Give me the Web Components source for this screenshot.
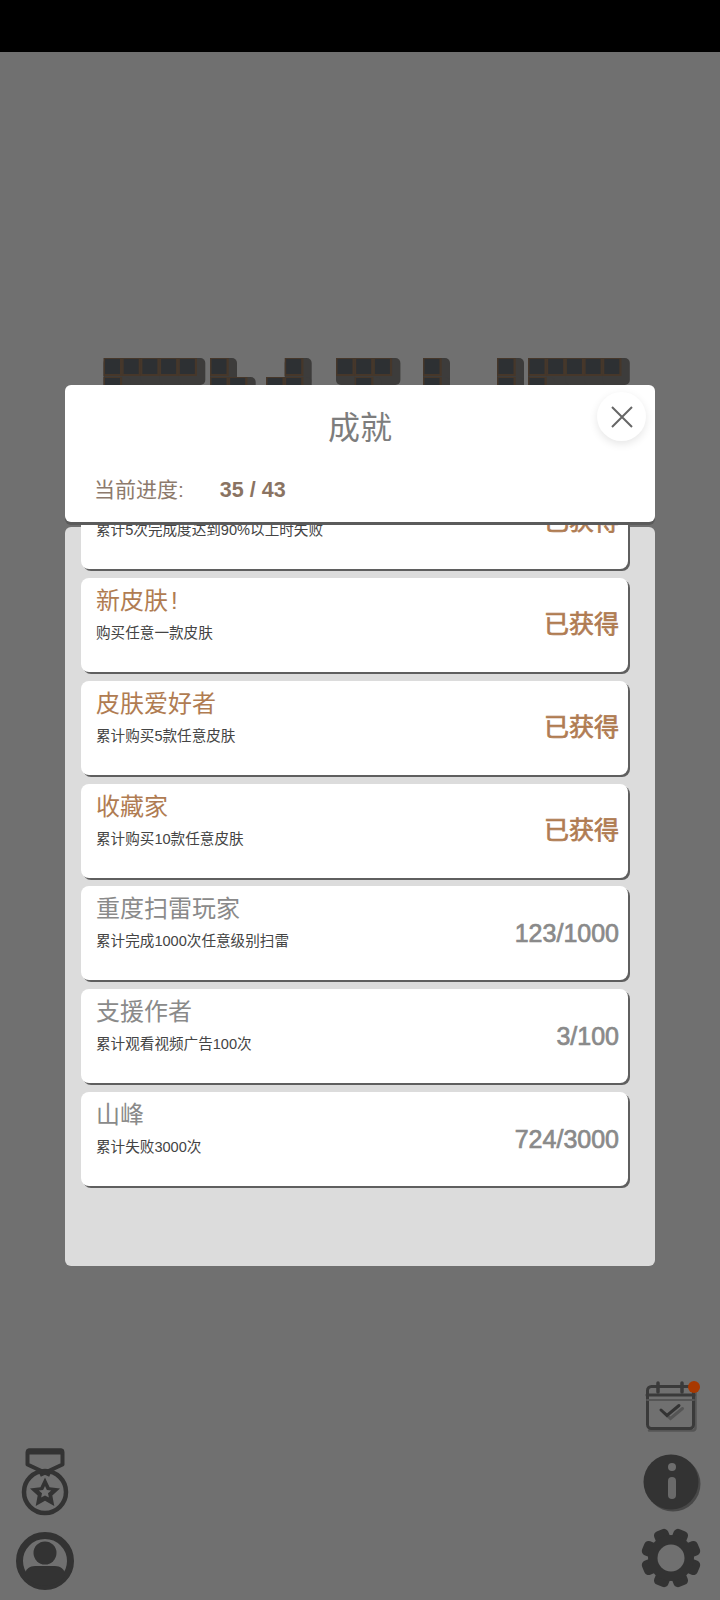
<!DOCTYPE html>
<html lang="zh"><head><meta charset="utf-8">
<style>
html,body{margin:0;padding:0;background:#707070}
body{font-family:"Liberation Sans","Noto Sans CJK SC",sans-serif}
</style></head><body>
<game-screen>
  <achievement-modal slot="modal" progress="35 / 43">
    <achievement-card state="done" name="" desc="累计5次完成度达到90%以上时失败" status="已获得"></achievement-card>
    <achievement-card state="done" name="新皮肤&lt;span style='margin-left:3px'&gt;!&lt;/span&gt;" desc="购买任意一款皮肤" status="已获得"></achievement-card>
    <achievement-card state="done" name="皮肤爱好者" desc="累计购买5款任意皮肤" status="已获得"></achievement-card>
    <achievement-card state="done" name="收藏家" desc="累计购买10款任意皮肤" status="已获得"></achievement-card>
    <achievement-card name="重度扫雷玩家" desc="累计完成1000次任意级别扫雷" status="123/1000"></achievement-card>
    <achievement-card name="支援作者" desc="累计观看视频广告100次" status="3/100"></achievement-card>
    <achievement-card name="山峰" desc="累计失败3000次" status="724/3000"></achievement-card>
  </achievement-modal>
</game-screen>
<script>
class GameScreen extends HTMLElement{
  constructor(){super();
    const groups=[
      {x:103.500,cells:[[0,0],[1,0],[2,0],[3,0],[4,0],[0,1]]},
      {x:210,cells:[[0,0],[0,1],[1,1]]},
      {x:266,cells:[[1,0],[0,1],[1,1]]},
      {x:336,cells:[[0,0],[1,0],[2,0],[1,1]]},
      {x:423,cells:[[0,0],[0,1]]},
      {x:497,cells:[[0,0],[0,1]]},
      {x:528,cells:[[0,0],[1,0],[2,0],[3,0],[4,0],[0,1]]}
    ];
    let cells='';
    for(const g of groups){for(const [c,r] of g.cells){
      const x=g.x+c*18.7,y=358+r*19;
      cells+=`<rect x="${x}" y="${y}" width="27" height="27" rx="5" fill="#3d3c3b"/>`;
    }}
    for(const g of groups){for(const [c,r] of g.cells){
      const x=g.x+c*18.7,y=358+r*19;
      cells+=`<rect x="${x}" y="${y}" width="18.700" height="18" fill="#46372a"/><rect x="${x+1.500}" y="${y+1}" width="15" height="15" fill="#2d3033"/>`;
    }}
    let teeth='';
    for(let k=0;k<8;k++){teeth+=`<rect x="-7.500" y="-30" width="15" height="18" rx="4.500" fill="#333" transform="rotate(${22.5+45*k})"/>`;}
    this.attachShadow({mode:'open'}).innerHTML=`<style>
      :host{display:block;position:relative;width:720px;height:1600px;overflow:hidden;background:#707070}
      .bar{height:52px;background:#000}
      .title{position:absolute;left:0;top:0;width:720px;height:420px;filter:blur(.6px)}
      .tools{position:absolute;left:0;right:0;bottom:0;padding:0 15px 0 16px;display:flex;justify-content:space-between;align-items:flex-end}
      .col{display:flex;flex-direction:column;align-items:center}
      svg{display:block}
    </style>
    <div class="bar"></div>
    <svg class="title" viewBox="0 0 720 420">${cells}</svg>
    <slot name="modal"></slot>
    <div class="tools">
      <div class="col" style="width:58px;gap:13px;padding-bottom:10px">
        <svg width="50" height="72" viewBox="0 0 50 72">
          <path d="M9.500 3.500h31a2 2 0 0 1 2 2v12L20 28M7.500 5.500v12L30 28M9.500 3.500a2 2 0 0 0-2 2" fill="none" stroke="#333" stroke-width="4" stroke-linejoin="round"/>
          <path d="M9 1.500h32a3 3 0 0 1 3 3v3H6v-3a3 3 0 0 1 3-3Z" fill="#333"/>
          <circle cx="25" cy="45" r="21" fill="none" stroke="#333" stroke-width="4.500"/>
          <path d="m25 30.500 4.600 9.700 10.400 1.200-7.700 7.200 2 10.400-9.300-5.200-9.300 5.200 2-10.400-7.700-7.200 10.400-1.200Z" fill="#333"/>
          <path d="m25 39 1.900 3.900 4.300.5-3.200 2.900.9 4.200L25 48.400l-3.900 2.100.9-4.200-3.200-2.900 4.300-.5Z" fill="#707070"/>
        </svg>
        <svg width="58" height="58" viewBox="0 0 58 58">
          <defs><clipPath id="uc"><circle cx="29" cy="29" r="25"/></clipPath></defs>
          <circle cx="29" cy="29" r="25.500" fill="none" stroke="#333" stroke-width="7"/>
          <circle cx="29" cy="21" r="11.500" fill="#333"/>
          <path d="M9 58V43c0-6 5-9 10-9h20c5 0 10 3 10 9v15Z" fill="#333" clip-path="url(#uc)"/>
        </svg>
      </div>
      <div class="col" style="width:68px;padding-bottom:11px">
        <svg width="62" height="52" viewBox="1 -1 62 52" style="margin-bottom:22px">
          <g fill="none" stroke-linecap="round">
            <path d="M10 49.500h44a2.500 2.500 0 0 0 2.500-2.500V8" stroke="#555" stroke-width="2.500"/>
            <rect x="8.500" y="5.500" width="46" height="42" rx="4" stroke="#3a3a3a" stroke-width="3"/>
            <path d="M8 14h47" stroke="#3a3a3a" stroke-width="3"/>
            <path d="M8 19h47" stroke="#555" stroke-width="2"/>
            <path d="M19 2v9M43 2v9" stroke="#3a3a3a" stroke-width="3.500"/>
            <path d="m24 30 6 5.500 12-10" stroke="#555" stroke-width="3" transform="translate(1.500 2)"/>
            <path d="m22 29 6 5.500 12-10" stroke="#333" stroke-width="3"/>
          </g>
          <circle cx="55" cy="6" r="6" fill="#a83800"/>
        </svg>
        <svg width="62" height="60" viewBox="0 0 62 60" style="margin-bottom:13px">
          <circle cx="33" cy="30" r="27.500" fill="#484848"/>
          <circle cx="31" cy="28" r="27.500" fill="#333"/>
          <circle cx="32" cy="13" r="4" fill="#6e6e6e"/>
          <rect x="28" y="23" width="8" height="22" rx="4" fill="#6a6a6a"/>
        </svg>
        <svg width="62" height="62" viewBox="-31 -31 62 62">
          ${teeth}
          <circle r="23" fill="#333"/>
          <circle r="13.500" fill="#707070"/>
        </svg>
      </div>
    </div>`;
  }
}
class AchievementModal extends HTMLElement{
  constructor(){super();
    this.attachShadow({mode:'open'}).innerHTML=`<style>
      :host{display:flex;flex-direction:column;position:absolute;left:65px;top:385px;width:590px;height:881px;z-index:2}
      header{position:relative;z-index:1;height:137px;box-sizing:border-box;background:#fff;border-radius:6px;box-shadow:0 3px 0 #5b5b5b;padding:21px 29px 0}
      h1{margin:0;font-size:32px;line-height:44px;font-weight:400;color:#7d7d7d;text-align:center}
      .progress{display:flex;margin-top:23px;font-size:21px;line-height:34px;color:#8d7a6c}
      .progress b{margin-left:36px;font-size:21.500px;color:#8a7362}
      .close{position:absolute;right:9px;top:7px;width:49px;height:49px;border-radius:50%;background:#fff;box-shadow:0 3px 8px rgba(0,0,0,.10);display:flex;align-items:center;justify-content:center}
      .panel{flex:1;background:#dcdcdc;border-radius:6px;margin-top:5px;padding:0 27px 0 16px}
      .list{display:flex;flex-direction:column;gap:8.800px;margin-top:-51.800px}
    </style>
    <header>
      <h1>成就</h1>
      <div class="progress"><span>当前进度:</span><b>${this.getAttribute('progress')}</b></div>
      <div class="close"><svg width="22" height="22" viewBox="0 0 22 22"><path d="M1 1 21 21M21 1 1 21" stroke="#666" stroke-width="2" fill="none"/></svg></div>
    </header>
    <div class="panel"><div class="list"><slot></slot></div></div>`;
  }
}
class AchievementCard extends HTMLElement{
  constructor(){super();
    const done=this.getAttribute('state')==='done';
    const c=done?'#b07c52':'#8a8a8a';
    this.attachShadow({mode:'open'}).innerHTML=`<style>
      :host{display:flex;height:94px;box-sizing:border-box;background:#fff;border-radius:8px;box-shadow:2px 2px 0 #5f5f5f;padding:7px 9px 0 15px;justify-content:space-between;align-items:flex-start}
      .name{min-height:32px;font-size:24px;line-height:32px;color:${c}}
      .desc{margin-top:6px;font-size:14.600px;line-height:21px;color:#444}
      .status{margin-top:${done?23:24}px;font-size:25px;line-height:32px;font-weight:400;-webkit-text-stroke:.7px ${c};color:${c};white-space:nowrap}
    </style>
    <div><div class="name">${this.getAttribute('name')}</div><div class="desc">${this.getAttribute('desc')}</div></div>
    <div class="status">${this.getAttribute('status')}</div>`;
  }
}
customElements.define('game-screen',GameScreen);
customElements.define('achievement-modal',AchievementModal);
customElements.define('achievement-card',AchievementCard);
</script>
</body></html>
